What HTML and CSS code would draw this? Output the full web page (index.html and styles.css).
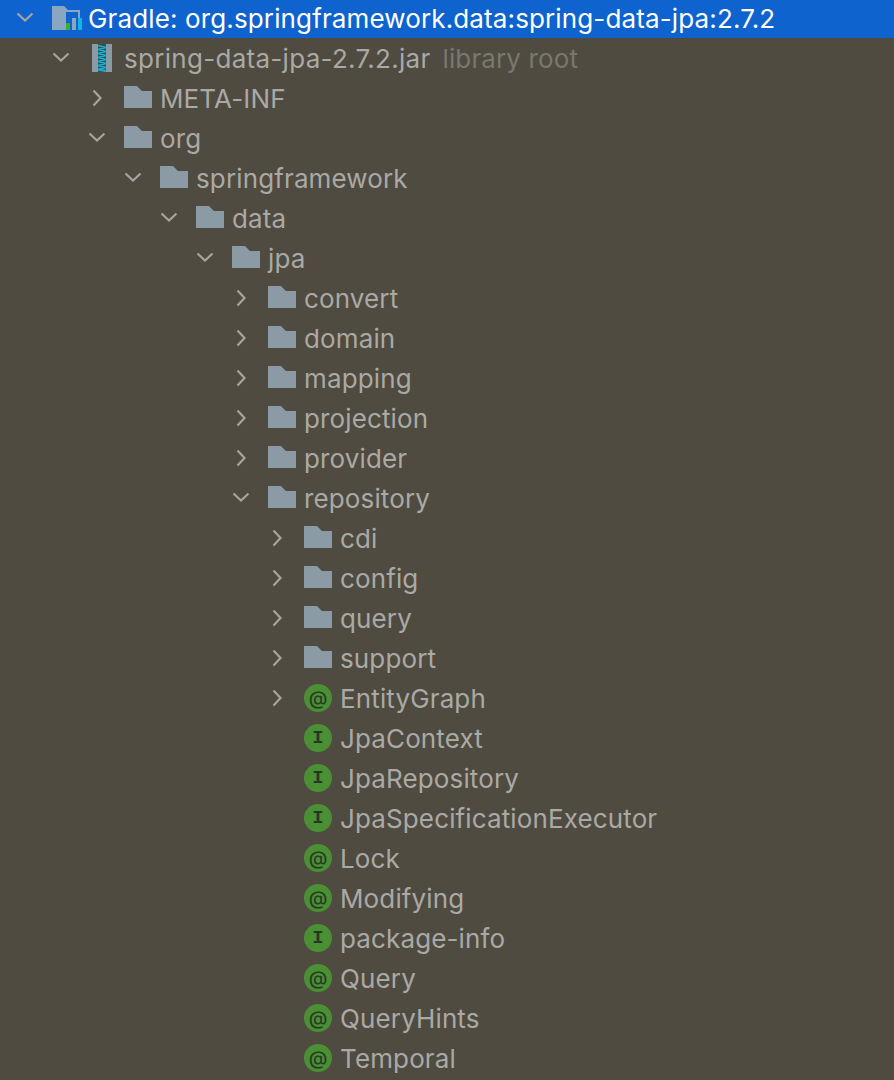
FILE: index.html
```html
<!doctype html>
<html lang="en">
	<head>
		<title>Project tree</title>
		<link rel="stylesheet" href="styles.css">
	</head>
	<body>
		<svg class="defs" width="0" height="0">
			<symbol id="folder" viewBox="0 0 28 22"><path d="M0 0H13L18 5H28V22H0Z"/></symbol>
			<symbol id="open" viewBox="0 0 18 10"><path d="M1.5 1.5L9 8.5L16.5 1.5" fill="none" stroke-width="2.2"/></symbol>
			<symbol id="closed" viewBox="0 0 10 18"><path d="M1.5 1.5L8.5 9L1.5 16.5" fill="none" stroke-width="2.2"/></symbol>
		</svg>
		<ul class="tree">
			<li class="row selected d0">
				<svg class="arrow down"><use href="#open"/></svg>
				<span class="icon">
					<svg class="gradle" width="30" height="24" viewBox="0 0 30 24">
						<path d="M0 0H12L16 4H28V12H26V6H14V24H0Z" fill="#8aa6c2"/>
						<rect x="14" y="17" width="4" height="7" fill="#3aae2e"/>
						<rect x="20" y="12" width="4" height="12" fill="#8aa6c2"/>
						<rect x="26" y="12" width="4" height="12" fill="#12b5e0"/>
					</svg>
				</span>
				<span class="name">Gradle: org.springframework.data:spring-data-jpa:2.7.2</span>
			</li>
			<li class="row d1">
				<svg class="arrow down"><use href="#open"/></svg>
				<span class="icon">
					<svg class="jar" width="20" height="28" viewBox="0 0 20 28">
						<rect width="6" height="28" fill="#8a9ba6"/>
						<rect x="14" width="6" height="28" fill="#8a9ba6"/>
						<rect x="6" width="8" height="28" fill="#3d4a50"/>
						<path d="M6 1.5L14 3.5L6 5.5L14 7.5L6 9.5L14 11.5L6 13.5L14 15.5L6 17.5L14 19.5L6 21.5L14 23.5L6 25.5L14 27" fill="none" stroke="#12b5d8" stroke-width="1.8"/>
					</svg>
				</span>
				<span class="name jar-name">spring-data-jpa-2.7.2.jar</span>
				<span class="name hint">library root</span>
			</li>
			<li class="row d2"><svg class="arrow right"><use href="#closed"/></svg><span class="icon"><svg class="folder"><use href="#folder"/></svg></span><span class="name">META-INF</span></li>
			<li class="row d2"><svg class="arrow down"><use href="#open"/></svg><span class="icon"><svg class="folder"><use href="#folder"/></svg></span><span class="name">org</span></li>
			<li class="row d3"><svg class="arrow down"><use href="#open"/></svg><span class="icon"><svg class="folder"><use href="#folder"/></svg></span><span class="name">springframework</span></li>
			<li class="row d4"><svg class="arrow down"><use href="#open"/></svg><span class="icon"><svg class="folder"><use href="#folder"/></svg></span><span class="name">data</span></li>
			<li class="row d5"><svg class="arrow down"><use href="#open"/></svg><span class="icon"><svg class="folder"><use href="#folder"/></svg></span><span class="name">jpa</span></li>
			<li class="row d6"><svg class="arrow right"><use href="#closed"/></svg><span class="icon"><svg class="folder"><use href="#folder"/></svg></span><span class="name">convert</span></li>
			<li class="row d6"><svg class="arrow right"><use href="#closed"/></svg><span class="icon"><svg class="folder"><use href="#folder"/></svg></span><span class="name">domain</span></li>
			<li class="row d6"><svg class="arrow right"><use href="#closed"/></svg><span class="icon"><svg class="folder"><use href="#folder"/></svg></span><span class="name">mapping</span></li>
			<li class="row d6"><svg class="arrow right"><use href="#closed"/></svg><span class="icon"><svg class="folder"><use href="#folder"/></svg></span><span class="name">projection</span></li>
			<li class="row d6"><svg class="arrow right"><use href="#closed"/></svg><span class="icon"><svg class="folder"><use href="#folder"/></svg></span><span class="name">provider</span></li>
			<li class="row d6"><svg class="arrow down"><use href="#open"/></svg><span class="icon"><svg class="folder"><use href="#folder"/></svg></span><span class="name">repository</span></li>
			<li class="row d7"><svg class="arrow right"><use href="#closed"/></svg><span class="icon"><svg class="folder"><use href="#folder"/></svg></span><span class="name">cdi</span></li>
			<li class="row d7"><svg class="arrow right"><use href="#closed"/></svg><span class="icon"><svg class="folder"><use href="#folder"/></svg></span><span class="name">config</span></li>
			<li class="row d7"><svg class="arrow right"><use href="#closed"/></svg><span class="icon"><svg class="folder"><use href="#folder"/></svg></span><span class="name">query</span></li>
			<li class="row d7"><svg class="arrow right"><use href="#closed"/></svg><span class="icon"><svg class="folder"><use href="#folder"/></svg></span><span class="name">support</span></li>
			<li class="row d7"><svg class="arrow right"><use href="#closed"/></svg><span class="icon"><span class="badge at">@</span></span><span class="name">EntityGraph</span></li>
			<li class="row d7"><span class="icon leaf"><span class="badge">I</span></span><span class="name">JpaContext</span></li>
			<li class="row d7"><span class="icon leaf"><span class="badge">I</span></span><span class="name">JpaRepository</span></li>
			<li class="row d7"><span class="icon leaf"><span class="badge">I</span></span><span class="name">JpaSpecificationExecutor</span></li>
			<li class="row d7"><span class="icon leaf"><span class="badge at">@</span></span><span class="name">Lock</span></li>
			<li class="row d7"><span class="icon leaf"><span class="badge at">@</span></span><span class="name">Modifying</span></li>
			<li class="row d7"><span class="icon leaf"><span class="badge">I</span></span><span class="name">package-info</span></li>
			<li class="row d7"><span class="icon leaf"><span class="badge at">@</span></span><span class="name">Query</span></li>
			<li class="row d7"><span class="icon leaf"><span class="badge at">@</span></span><span class="name">QueryHints</span></li>
			<li class="row d7"><span class="icon leaf"><span class="badge at">@</span></span><span class="name">Temporal</span></li>
		</ul>
	</body>
</html>
```

FILE: styles.css
```css
html, body {
	margin: 0;
	height: 1080px;
	overflow: hidden;
	background-color: #4f4b41;
}

body {
	font-family: Inter, "Noto Sans", sans-serif;
	font-size: 26px;
	letter-spacing: 0.13px;
	color: #aaa9a6;
}

.defs {
	display: block;
	height: 0;
}

.tree {
	list-style: none;
	margin: 0;
	padding: 0;
}

.row {
	display: flex;
	align-items: center;
	height: 40px;
	white-space: nowrap;
}

.selected {
	height: 38px;
	margin-bottom: 1px;
	background-color: #0f63ce;
	color: #fff;
}

.d0 { padding-left: 8px; }
.d1 { padding-left: 44px; }
.d2 { padding-left: 80px; }
.d3 { padding-left: 116px; }
.d4 { padding-left: 152px; }
.d5 { padding-left: 188px; }
.d6 { padding-left: 224px; }
.d7 { padding-left: 260px; }

.arrow {
	flex: none;
	stroke: #a5a4a0;
}

.arrow.down {
	width: 18px;
	height: 10px;
	margin: 0 10px 4px 8px;
}

.arrow.right {
	width: 10px;
	height: 18px;
	margin: 0 14px 2px 12px;
}

.icon {
	flex: none;
	display: flex;
	justify-content: flex-end;
	align-items: center;
	width: 36px;
	margin-right: 8px;
}

.icon.leaf {
	margin-left: 36px;
}

.selected .icon {
	margin-right: 6px;
	width: 38px;
}

.gradle {
	margin-bottom: 2px;
}

.jar {
	margin: 0 4px 2px 0;
}

.folder {
	width: 28px;
	height: 22px;
	margin-bottom: 4px;
	fill: #8a9ba6;
}

.badge {
	display: flex;
	justify-content: center;
	align-items: center;
	width: 28px;
	height: 28px;
	margin-bottom: 2px;
	border-radius: 50%;
	background-color: #4b8f35;
	color: #263a24;
	font-family: "Liberation Mono", monospace;
	font-size: 19px;
	font-weight: 700;
	letter-spacing: 0;
}

.badge.at {
	font-family: Inter, sans-serif;
	font-size: 19px;
	font-weight: 500;
}

.name {
	padding-bottom: 2px;
}

.jar-name {
	letter-spacing: 0.29px;
}

.hint {
	margin-left: 12px;
	color: #7a776f;
}
```
